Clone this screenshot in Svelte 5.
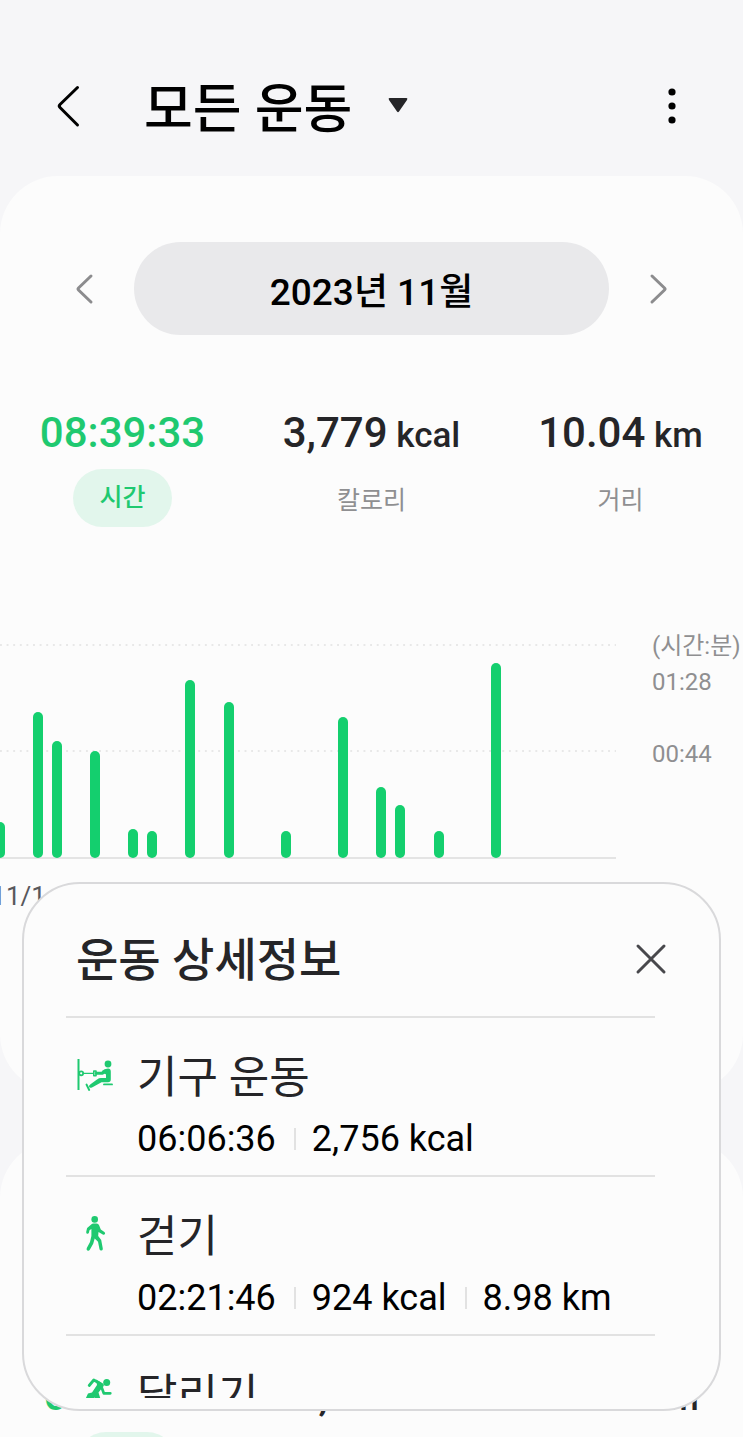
<script>
  // 월별 통계 요약
  const monthStats = [
    { value: '08:39:33', unit: '', label: '시간' },
    { value: '3,779', unit: 'kcal', label: '칼로리' },
    { value: '10.04', unit: 'km', label: '거리' },
  ];

  const totalStats = [
    { value: '08:39:33', unit: '', label: '시간' },
    { value: '12,779', unit: 'kcal', label: '칼로리' },
    { value: '10.04', unit: 'km', label: '거리' },
  ];

  // 하루 운동 시간(분), 차트 최댓값은 88분
  const MAX_MINUTES = 88;
  const minutes = [
    15, 0, 60, 48, 0, 44, 0, 12, 11, 0, 73, 0, 64, 0, 0, 11, 0,
    0, 58, 0, 29, 22, 0, 11, 0, 0, 80, 0, 0, 0, 0, 0, 0,
  ];

  const workouts = [
    { icon: 'machine', name: '기구 운동', values: ['06:06:36', '2,756 kcal'] },
    { icon: 'walk', name: '걷기', values: ['02:21:46', '924 kcal', '8.98 km'] },
    { icon: 'run', name: '달리기', values: [] },
  ];

  let selected = $state('시간');
  let detailOpen = $state(true);
</script>

{#snippet stats(items)}
  <div class="stats">
    {#each items as item}
      <button
        type="button"
        class="stat"
        class:active={selected === item.label}
        onclick={() => (selected = item.label)}
      >
        <span class="stat-value">
          {item.value}{#if item.unit}<span class="unit">&nbsp;{item.unit}</span>{/if}
        </span>
        <span class="stat-label">{item.label}</span>
      </button>
    {/each}
  </div>
{/snippet}

<div class="screen">
  <header class="topbar">
    <button type="button" class="icon-btn" aria-label="뒤로">
      <svg width="24" height="44" viewBox="0 0 24 44" fill="none" stroke="#000" stroke-width="3" stroke-linecap="round" stroke-linejoin="round">
        <path d="M21.500 3.500 4 20.500q-1.500 1.500 0 3L21.500 41" />
      </svg>
    </button>
    <button type="button" class="title-btn">
      <h1>모든 운동</h1>
      <svg width="20" height="18" viewBox="0 0 20 18" aria-hidden="true">
        <path d="M1.500 1h17q1.500 0 .5 2L11 14.500q-1 1.500-2 0L1 3Q0 1 1.500 1Z" fill="#252528" />
      </svg>
    </button>
    <button type="button" class="icon-btn" aria-label="더보기">
      <svg width="8" height="38" viewBox="0 0 8 38" fill="#000">
        <circle cx="4" cy="5" r="3.600" />
        <circle cx="4" cy="19" r="3.600" />
        <circle cx="4" cy="33" r="3.600" />
      </svg>
    </button>
  </header>

  <main>
    <section class="card">
      <div class="month-nav">
        <button type="button" class="icon-btn" aria-label="이전 달">
          <svg width="20" height="32" viewBox="0 0 20 32" fill="none" stroke="#8c8c8e" stroke-width="3" stroke-linecap="round" stroke-linejoin="round">
            <path d="M16 3 3.500 15q-1 1 0 2L16 29" />
          </svg>
        </button>
        <button type="button" class="month">2023년 11월</button>
        <button type="button" class="icon-btn" aria-label="다음 달">
          <svg width="20" height="32" viewBox="0 0 20 32" fill="none" stroke="#8c8c8e" stroke-width="3" stroke-linecap="round" stroke-linejoin="round">
            <path d="M4 3 16.500 15q1 1 0 2L4 29" />
          </svg>
        </button>
      </div>

      {@render stats(monthStats)}

      <div class="chart">
        <div class="plot-area">
          <div class="plot">
            <div class="bars">
              {#each minutes as value}
                <div class="slot">
                  {#if value}
                    <div class="bar" style="height: {(value / MAX_MINUTES) * 100}%"></div>
                  {/if}
                </div>
              {/each}
            </div>
          </div>
          <div class="x-axis"><span>11/1</span></div>
        </div>
        <div class="y-axis">
          <span>(시간:분)</span>
          <span>01:28</span>
          <span class="mid">00:44</span>
        </div>
      </div>
    </section>

    <section class="card total">
      {@render stats(totalStats)}
    </section>
  </main>

  {#if detailOpen}
    <div class="detail" role="dialog" aria-labelledby="detail-title">
      <div class="detail-head">
        <h2 id="detail-title">운동 상세정보</h2>
        <button type="button" class="icon-btn" aria-label="닫기" onclick={() => (detailOpen = false)}>
          <svg width="32" height="32" viewBox="0 0 32 32" fill="none" stroke="#48484c" stroke-width="3" stroke-linecap="round">
            <path d="M3 3 29 29M29 3 3 29" />
          </svg>
        </button>
      </div>
      <ul class="workouts">
        {#each workouts as workout}
          <li>
            <svg class="workout-icon" width="38" height="38" viewBox="0 0 38 38" fill="none" stroke="#1fc970" stroke-linecap="round" stroke-linejoin="round" aria-hidden="true">
              {#if workout.icon === 'machine'}
                <path d="M2.500 2v31" stroke-width="2" stroke-linecap="butt" />
                <circle cx="5.200" cy="16.300" r="2" stroke-width="1.700" />
                <path d="M7 16.300h10.500" stroke-width="1.300" />
                <path d="M17.800 14h2.200v4.800h-2.200z" stroke-width="1.600" />
                <path d="M20.500 16.300h5.500l4-1.800" stroke-width="3" />
                <circle cx="32" cy="7" r="3.400" fill="#1fc970" stroke="none" />
                <path d="M25.500 14.200q3-2.700 6.500-2.700 2.800 0 2.800 3v8q0 2.800-2.800 2.800h-6.500L16 30.500q-2.500 1-3-.8-.3-1.500 1.500-2.500l6.500-4.800q2-1.400 4-1.400h5v-3.500Z" fill="#1fc970" stroke="none" />
                <path d="M10.500 27.500 13.200 33M28 27.400h8" stroke-width="1.900" />
              {:else if workout.icon === 'walk'}
                <circle cx="18.700" cy="3.400" r="3.300" fill="#1fc970" stroke="none" />
                <path d="M17.500 7.500h3q2 0 2.700 2l1.600 4 3.600 2.600q1.200 1 .5 2-.8 1-2.100.3L22.500 16l-.3 4 3 4 1.600 8.500q.2 1.800-1.300 2.100-1.600.2-2-1.400L22 25.800l-3.300-3.300-1.500 5.200-3.400 6q-1 1.400-2.400.7-1.400-.8-.6-2.400l3.200-6 1.400-6V13l-1.900 1.200-.6 2.600q-.5 1.300-1.700 1-1.200-.3-1-1.700l.7-3.400q.2-.7.8-1.100l3.500-3q1-1.100 2.300-1.100Z" fill="#1fc970" stroke="none" />
              {:else}
                <circle cx="30.700" cy="7.400" r="3.500" fill="#1fc970" stroke="none" />
                <path d="M13.200 10.500 17.800 5 24 8.500" stroke-width="2.800" />
                <path d="M20 4.500 27 8.500q1.500 1.500.3 3l-4.800 6 2 6.500-2 10h-3.500l1-10-1.500-1.500L17 24l-5 1H9l3-6.500 4-1L21 10Z" fill="#1fc970" stroke="none" />
                <path d="M25.500 12 27.800 18.300h6.500" stroke-width="2.700" />
              {/if}
            </svg>
            <div class="workout-text">
              <h3>{workout.name}</h3>
              <p>
                {#each workout.values as value}
                  <span>{value}</span>
                {/each}
              </p>
            </div>
          </li>
        {/each}
      </ul>
    </div>
  {/if}
</div>

<style>
  :global(body) {
    margin: 0;
    background: #f6f6f8;
  }

  .screen {
    position: relative;
    height: 100vh;
    overflow: hidden;
    background: #f6f6f8;
    font-family: Roboto, 'Noto Sans CJK KR', sans-serif;
    color: #252528;
  }

  button {
    padding: 0;
    border: none;
    background: none;
    font: inherit;
    color: inherit;
    cursor: pointer;
  }

  h1,
  h2,
  h3,
  p,
  ul {
    margin: 0;
    padding: 0;
  }

  .icon-btn {
    display: flex;
    flex-shrink: 0;
  }

  .topbar {
    display: flex;
    align-items: center;
    height: 176px;
    padding: 36px 67px 0 56px;
    box-sizing: border-box;
  }

  .title-btn {
    display: flex;
    align-items: center;
    gap: 36px;
    margin: 0 auto 0 64px;
  }

  h1 {
    padding-top: 8px;
    font-size: 53px;
    line-height: 64px;
    font-weight: 500;
    color: #000;
  }

  main {
    display: flex;
    flex-direction: column;
    gap: 48px;
  }

  .card {
    box-sizing: border-box;
    min-height: 916px;
    padding-top: 66px;
    border-radius: 58px;
    background: #fcfcfc;
    overflow: hidden;
  }

  .month-nav {
    display: flex;
    align-items: center;
    justify-content: space-between;
    gap: 39px;
    padding: 0 75px;
    margin-bottom: 66px;
  }

  .month {
    flex: 1;
    height: 93px;
    border-radius: 47px;
    background: #e9e9eb;
    font-size: 37px;
    font-weight: 500;
    color: #000;
  }

  .stats {
    display: grid;
    grid-template-columns: repeat(3, 1fr);
    gap: 4px;
  }

  .stat {
    display: flex;
    flex-direction: column;
    align-items: center;
    gap: 5px;
  }

  .stat-value {
    font-size: 42px;
    line-height: 63px;
    font-weight: 500;
    white-space: nowrap;
  }

  .unit {
    font-size: 35px;
  }

  .stat-label {
    padding: 0 26px;
    border-radius: 29px;
    font-size: 25px;
    line-height: 58px;
    color: #8f8f91;
  }

  .active .stat-value {
    color: #1fc970;
  }

  .active .stat-label {
    background: #e2f6ec;
    color: #1fc970;
    font-weight: 500;
  }

  .chart {
    display: flex;
    gap: 36px;
    margin-top: 114px;
  }

  .plot-area {
    flex: 1;
  }

  .plot {
    height: 213px;
    border-bottom: 2px solid #e4e4e4;
    background-image: linear-gradient(90deg, #e8e8e8 2px, transparent 2px),
      linear-gradient(90deg, #e8e8e8 2px, transparent 2px);
    background-size: calc(100% / 93) 2px;
    background-position: 0 0, 0 50%;
    background-repeat: repeat-x;
  }

  .bars,
  .x-axis {
    display: grid;
    grid-template-columns: repeat(33, minmax(0, 1fr));
    margin: 0 -4px 0 -10px;
  }

  .bars {
    height: 214px;
  }

  .slot {
    display: flex;
    align-items: flex-end;
    justify-content: center;
  }

  .bar {
    width: 10px;
    border-radius: 5px;
    background: #14cf6e;
  }

  .x-axis {
    margin-top: 20px;
    font-size: 26px;
    line-height: 34px;
    color: #58585c;
  }

  .x-axis span {
    grid-column: 2;
    justify-self: center;
  }

  .y-axis {
    display: flex;
    flex-direction: column;
    width: 91px;
    margin-top: -16px;
    font-size: 24px;
    line-height: 36px;
    color: #8f8f91;
    white-space: nowrap;
  }

  .mid {
    margin-top: 36px;
  }

  .total {
    padding: 224px 6px 0;
  }

  .detail {
    position: absolute;
    right: 22px;
    bottom: 26px;
    left: 22px;
    display: flex;
    flex-direction: column;
    box-sizing: border-box;
    height: 529px;
    padding: 0 64px 11px 42px;
    border: 2px solid #d9d9db;
    border-radius: 58px;
    background: #fcfcfc;
  }

  .detail-head {
    display: flex;
    align-items: center;
    justify-content: space-between;
    flex-shrink: 0;
    height: 132px;
    padding: 18px 0 0 10px;
    margin-right: -12px;
    box-sizing: border-box;
  }

  h2 {
    padding-top: 2px;
    font-size: 46px;
    line-height: 60px;
    font-weight: 500;
  }

  .workouts {
    flex: 1;
    min-height: 0;
    overflow-y: auto;
    scrollbar-width: none;
    list-style: none;
  }

  li {
    display: flex;
    gap: 23px;
    height: 159px;
    padding: 30px 0 0 10px;
    border-top: 2px solid #e2e2e2;
    box-sizing: border-box;
  }

  .workout-icon {
    flex-shrink: 0;
    margin-top: 9px;
  }

  h3 {
    font-size: 44px;
    line-height: 60px;
    font-weight: 400;
  }

  .workout-text p {
    display: flex;
    font-size: 36px;
    line-height: 62px;
    color: #000;
    white-space: nowrap;
  }

  .workout-text p span + span {
    margin-left: 18px;
    padding-left: 18px;
    background: linear-gradient(#e2e2e2, #e2e2e2) 0 50% / 2px 22px no-repeat;
  }
</style>
